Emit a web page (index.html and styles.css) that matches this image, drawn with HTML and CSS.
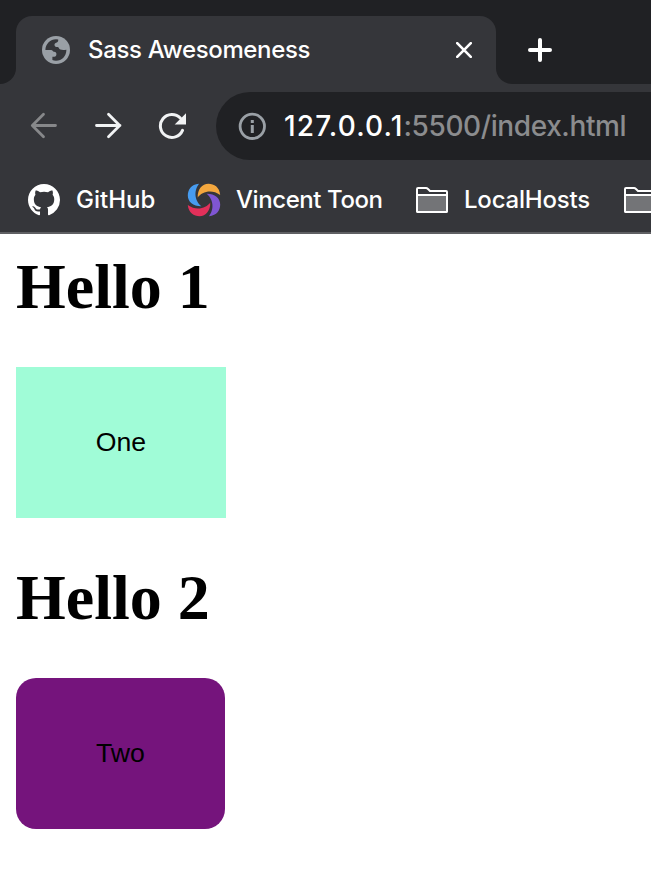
FILE: index.html
```html
<!DOCTYPE html>
<html lang="en">
<head>
<meta charset="utf-8">
<title>Sass Awesomeness</title>
<link rel="stylesheet" href="styles.css">
</head>
<body>
<header class="browser">
  <div class="tabstrip">
    <div class="gutter"></div>
    <div class="tab">
      <svg class="globe" width="28" height="28" viewBox="0 0 28 28"><circle cx="14" cy="14" r="14" fill="#9aa0a6"/><path d="M3.4 14C3.4 8 8.5 3.3 14 3.3l2.2.2c.2 1.5-.2 2.3-1.4 2.9-2 .8-2.6 1.7-2.2 3 .5 1.4 1.500 1.700 3 1.600 1.200 0 1.300 2 2.700 2.500 1.400.6 3.500.6 6.100.2 0 6.500-4.600 11-10.400 11-1.500 0-2.600-.2-3.600-.6v-3.300c2.200.1 3.800-.3 4-2.400.1-1.600-.6-2.600-2.300-2.700-1.600-.1-1.300-1.700-3.100-1.700z" fill="#35363a"/></svg>
      <span class="tab-title">Sass Awesomeness</span>
      <svg class="close" width="16" height="16" viewBox="0 0 16 16"><path d="M1.200 1.200l13.600 13.600M14.800 1.200L1.200 14.800" stroke="#fff" stroke-width="2.600" stroke-linecap="round"/></svg>
    </div>
    <div class="tab-rest">
      <svg width="24" height="24" viewBox="0 0 24 24"><path d="M12 2v20M2 12h20" stroke="#fff" stroke-width="4" stroke-linecap="round"/></svg>
    </div>
  </div>
  <div class="toolbar">
    <svg width="28" height="28" viewBox="0 0 28 28" fill="none" stroke="#87888a" stroke-width="2.8" stroke-linecap="round" stroke-linejoin="round"><path d="M25.500 13.500H2.500M13.500 2.300L2.300 13.500 13.500 24.700"/></svg>
    <svg width="28" height="28" viewBox="0 0 28 28" fill="none" stroke="#f1f3f4" stroke-width="2.8" stroke-linecap="round" stroke-linejoin="round"><path d="M2.500 13.500h23.500M14.500 2.300L25.700 13.500 14.500 24.700"/></svg>
    <svg width="28" height="28" viewBox="0 0 28 28"><path d="M24.500 18.400A11.500 11.500 0 1 1 22.300 6.100" fill="none" stroke="#f1f3f4" stroke-width="3" stroke-linecap="round"/><path d="M28 1.200v11.300H16.700z" fill="#f1f3f4"/></svg>
    <div class="omnibox">
      <svg width="28" height="28" viewBox="0 0 28 28"><circle cx="14.300" cy="14.300" r="12.200" fill="none" stroke="#9aa0a6" stroke-width="2.800"/><path d="M12.800 8h3v3h-3zM12.800 13h3v8h-3z" fill="#9aa0a6"/></svg>
      <span class="url"><span class="host">127.0.0.1</span>:5500/index.html</span>
    </div>
  </div>
  <nav class="bookmarks">
    <div class="bookmark github">
      <svg width="32" height="32" viewBox="0 0 16 16"><path fill="#fff" d="M8 0C3.580 0 0 3.580 0 8c0 3.540 2.290 6.530 5.470 7.590.4.070.55-.17.55-.38 0-.19-.01-.82-.01-1.490-2.010.37-2.530-.49-2.690-.94-.09-.23-.48-.94-.82-1.130-.28-.15-.68-.52-.01-.53.63-.01 1.080.58 1.230.82.72 1.210 1.870.87 2.330.66.070-.52.28-.87.51-1.070-1.780-.2-3.640-.89-3.640-3.950 0-.87.31-1.590.82-2.150-.08-.2-.36-1.020.08-2.120 0 0 .67-.21 2.200.82.640-.18 1.320-.27 2-.27s1.360.09 2 .27c1.530-1.040 2.200-.82 2.200-.82.440 1.100.160 1.920.080 2.120.510.560.820 1.270.820 2.150 0 3.070-1.870 3.750-3.650 3.950.290.250.540.730.540 1.480 0 1.070-.010 1.930-.010 2.200 0 .21.150.46.550.38A8.010 8.010 0 0 0 16 8c0-4.420-3.580-8-8-8z"/></svg>
      <span>GitHub</span>
    </div>
    <div class="bookmark vincent">
      <svg width="34" height="34" viewBox="0 0 34 34"><path fill="#479cf0" d="M12 .8C4 1.500.8 7 .8 12.500.8 19 6.500 23.500 14.500 23.300 9 19.500 5.500 9.500 12 .8z"/><path fill="#f3a73e" transform="rotate(90 17 17)" d="M12 .8C4 1.500.8 7 .8 12.500.8 19 6.500 23.500 14.500 23.300 9 19.500 5.500 9.500 12 .8z"/><path fill="#7f56d3" transform="rotate(180 17 17)" d="M12 .8C4 1.500.8 7 .8 12.500.8 19 6.500 23.500 14.500 23.300 9 19.500 5.500 9.500 12 .8z"/><path fill="#e2305a" transform="rotate(270 17 17)" d="M12 .8C4 1.500.8 7 .8 12.500.8 19 6.500 23.500 14.500 23.300 9 19.500 5.500 9.500 12 .8z"/></svg>
      <span>Vincent Toon</span>
    </div>
    <div class="bookmark local">
      <svg width="32" height="26" viewBox="0 0 32 26"><path d="M1 8V2q0-1 1-1h8q1 0 2 1l2 2h16q1 0 1 1v19q0 1-1 1H2q-1 0-1-1z" fill="#35363a" stroke="#fff" stroke-width="2"/><path d="M1 8h30v16q0 1-1 1H2q-1 0-1-1z" fill="#737477" stroke="#fff" stroke-width="2"/></svg>
      <span>LocalHosts</span>
    </div>
    <div class="bookmark">
      <svg width="32" height="26" viewBox="0 0 32 26"><path d="M1 8V2q0-1 1-1h8q1 0 2 1l2 2h16q1 0 1 1v19q0 1-1 1H2q-1 0-1-1z" fill="#35363a" stroke="#fff" stroke-width="2"/><path d="M1 8h30v16q0 1-1 1H2q-1 0-1-1z" fill="#737477" stroke="#fff" stroke-width="2"/></svg>
    </div>
  </nav>
</header>
<main class="page">
  <h1>Hello 1</h1>
  <div class="button one">One</div>
  <h1>Hello 2</h1>
  <div class="button two">Two</div>
</main>
</body>
</html>
```
FILE: styles.css
```css
* { box-sizing: border-box; }
body { margin: 0; background: #fff; overflow: hidden; }
svg { display: block; flex: none; }
.browser {
  height: 234px;
  background: #35363a;
  border-bottom: 2px solid #5f6063;
  color: #fff;
  font-family: Inter, "Liberation Sans", sans-serif;
  font-weight: 450;
  overflow: hidden;
}
.tabstrip {
  display: grid;
  grid-template-columns: 16px 480px 1fr;
  height: 84px;
  background: linear-gradient(#202124 50%, #35363a 50%);
}
.gutter { background: #202124; border-bottom-right-radius: 16px; }
.tab {
  margin-top: 16px;
  padding: 0 24px 0 26px;
  display: flex;
  align-items: center;
  background: #35363a;
  border-radius: 16px 16px 0 0;
}
.tab-title { margin-left: 18px; font-size: 24px; line-height: 30px; letter-spacing: -0.34px; white-space: nowrap; }
.close { margin-left: auto; }
.tab-rest {
  display: flex;
  align-items: center;
  padding: 16px 0 0 32px;
  background: #202124;
  border-bottom-left-radius: 16px;
}
.toolbar {
  display: flex;
  align-items: center;
  gap: 36px;
  height: 84px;
  padding-left: 30px;
}
.omnibox {
  flex: 1;
  display: flex;
  align-items: center;
  height: 68px;
  margin-left: -6px;
  padding-left: 22px;
  background: #202124;
  border-radius: 34px 0 0 34px;
}
.url { margin-left: 18px; font-size: 28px; line-height: 34px; letter-spacing: -0.4px; color: #8b8c8e; white-space: nowrap; }
.host { color: #fff; letter-spacing: 1.15px; }
.bookmarks { display: flex; height: 64px; padding-left: 28px; }
.bookmark { display: flex; align-items: center; flex: none; font-size: 24px; line-height: 30px; white-space: nowrap; }
.github { width: 159px; gap: 16px; }
.vincent { width: 229px; gap: 15px; letter-spacing: -0.42px; }
.local { width: 208px; gap: 16px; letter-spacing: -0.2px; }
.page { padding: 16px 16px; }
h1 {
  margin: 0;
  font: bold 64px/73px "Liberation Serif", serif;
}
.button {
  display: flex;
  align-items: center;
  justify-content: center;
  height: 151px;
  margin: 44px 0;
  font: 26.67px/31px "Liberation Sans", sans-serif;
  color: #000;
}
.one { width: 210px; background: #a0fcd7; margin-bottom: 43px; }
.two { width: 209px; background: #75147c; border-radius: 20px; }
```
